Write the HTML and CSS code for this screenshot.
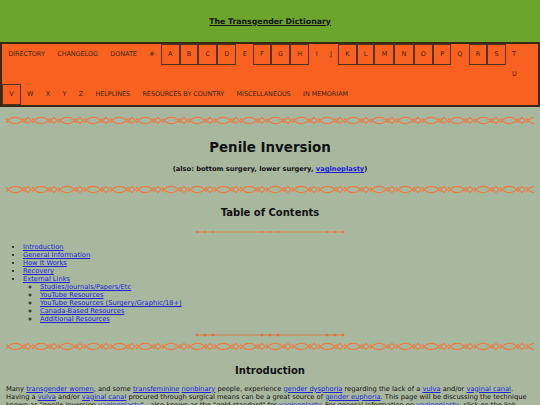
FILE: index.html
```html
<!DOCTYPE html>
<html>
<head>
<meta charset="utf-8">
<title>Penile Inversion - The Transgender Dictionary</title>
<link rel="stylesheet" href="styles.css">
</head>
<body>
<div class="top">
  <a href="#" class="siteName">The Transgender Dictionary</a>
</div>
<ul class="nav">
  <li><a href="#">DIRECTORY</a></li>
  <li><a href="#">CHANGELOG</a></li>
  <li><a href="#">DONATE</a></li>
  <li><a href="#">#</a></li>
  <li class="on"><a href="#">A</a></li>
  <li class="on"><a href="#">B</a></li>
  <li class="on"><a href="#">C</a></li>
  <li class="on"><a href="#">D</a></li>
  <li><a href="#">E</a></li>
  <li class="on"><a href="#">F</a></li>
  <li class="on"><a href="#">G</a></li>
  <li class="on"><a href="#">H</a></li>
  <li><a href="#">I</a></li>
  <li><a href="#">J</a></li>
  <li class="on"><a href="#">K</a></li>
  <li class="on"><a href="#">L</a></li>
  <li class="on"><a href="#">M</a></li>
  <li class="on"><a href="#">N</a></li>
  <li class="on"><a href="#">O</a></li>
  <li class="on"><a href="#">P</a></li>
  <li><a href="#">Q</a></li>
  <li class="on"><a href="#">R</a></li>
  <li class="on"><a href="#">S</a></li>
  <li><a href="#">T</a></li>
  <li><a href="#">U</a></li>
  <li class="on"><a href="#">V</a></li>
  <li><a href="#">W</a></li>
  <li><a href="#">X</a></li>
  <li><a href="#">Y</a></li>
  <li><a href="#">Z</a></li>
  <li><a href="#">HELPLINES</a></li>
  <li><a href="#">RESOURCES BY COUNTRY</a></li>
  <li><a href="#">MISCELLANEOUS</a></li>
  <li><a href="#">IN MEMORIAM</a></li>
</ul>
<div class="content">
  <!-- chain border, one link + bead per tile -->
  <svg class="chain" height="11">
    <defs>
      <pattern id="links" width="26" height="11" patternUnits="userSpaceOnUse">
        <path d="M0,8 C5,0.5 13.5,0.5 18.5,8 M0,3 C5,10.5 13.5,10.5 18.5,3" fill="none" stroke="#e97c45" stroke-width="1.35"/>
        <path d="M18.5,5.5 L22,2.5 L25.5,5.5 L22,8.5 Z" fill="none" stroke="#e97c45" stroke-width="1.2"/>
      </pattern>
    </defs>
    <rect width="100%" height="11" fill="url(#links)"/>
  </svg>
  <h1>Penile Inversion</h1>
  <p class="aka">(also: bottom surgery, lower surgery, <a href="#">vaginoplasty</a>)</p>
  <svg class="chain" height="11"><rect width="100%" height="11" fill="url(#links)"/></svg>

  <h2>Table of Contents</h2>
  <svg class="rule" width="150" height="6" viewBox="0 0 150 6">
    <line x1="2" y1="3" x2="148" y2="3" stroke="#e07a48" stroke-width="0.9"/>
    <g fill="#e07a48">
      <path d="M2,1.5 L3.5,3 L2,4.5 L0.5,3 Z M10,1.5 L11.5,3 L10,4.5 L8.5,3 Z M18,1.5 L19.5,3 L18,4.5 L16.5,3 Z"/>
      <path d="M67,1.5 L68.5,3 L67,4.5 L65.5,3 Z M75,1.5 L76.5,3 L75,4.5 L73.5,3 Z M83,1.5 L84.5,3 L83,4.5 L81.5,3 Z"/>
      <path d="M132,1.5 L133.5,3 L132,4.5 L130.5,3 Z M140,1.5 L141.5,3 L140,4.5 L138.5,3 Z M148,1.5 L149.5,3 L148,4.5 L146.5,3 Z"/>
    </g>
  </svg>
  <ul class="toc">
    <li><a href="#introduction">Introduction</a></li>
    <li><a href="#">General Information</a></li>
    <li><a href="#">How It Works</a></li>
    <li><a href="#">Recovery</a></li>
    <li><a href="#">External Links</a>
      <ul>
        <li><a href="#">Studies/Journals/Papers/Etc</a></li>
        <li><a href="#">YouTube Resources</a></li>
        <li><a href="#">YouTube Resources (Surgery/Graphic/18+)</a></li>
        <li><a href="#">Canada-Based Resources</a></li>
        <li><a href="#">Additional Resources</a></li>
      </ul>
    </li>
  </ul>
  <svg class="rule" width="150" height="6" viewBox="0 0 150 6">
    <line x1="2" y1="3" x2="148" y2="3" stroke="#e8692e" stroke-width="0.8"/>
    <g fill="#ee6424">
      <path d="M2,1 L2.6,2.4 L4,3 L2.6,3.6 L2,5 L1.4,3.6 L0,3 L1.4,2.4 Z M10,1 L10.6,2.4 L12,3 L10.6,3.6 L10,5 L9.4,3.6 L8,3 L9.4,2.4 Z M18,1 L18.6,2.4 L20,3 L18.6,3.6 L18,5 L17.4,3.6 L16,3 L17.4,2.4 Z"/>
      <path d="M67,1 L67.6,2.4 L69,3 L67.6,3.6 L67,5 L66.4,3.6 L65,3 L66.4,2.4 Z M75,1 L75.6,2.4 L77,3 L75.6,3.6 L75,5 L74.4,3.6 L73,3 L74.4,2.4 Z M83,1 L83.6,2.4 L85,3 L83.6,3.6 L83,5 L82.4,3.6 L81,3 L82.4,2.4 Z"/>
      <path d="M132,1 L132.6,2.4 L134,3 L132.6,3.6 L132,5 L131.4,3.6 L130,3 L131.4,2.4 Z M140,1 L140.6,2.4 L142,3 L140.6,3.6 L140,5 L139.4,3.6 L138,3 L139.4,2.4 Z M148,1 L148.6,2.4 L150,3 L148.6,3.6 L148,5 L147.4,3.6 L146,3 L147.4,2.4 Z"/>
    </g>
  </svg>
  <svg class="chain chainLow" height="11"><rect width="100%" height="11" fill="url(#links)"/></svg>

  <h2 id="introduction" class="sectionHead">Introduction</h2>
  <p class="text">Many <a href="#">transgender women</a>, and some <a href="#">transfeminine</a> <a href="#">nonbinary</a> people, experience <a href="#">gender dysphoria</a> regarding the lack of a <a href="#">vulva</a> and/or <a href="#">vaginal canal</a>. Having a <a href="#">vulva</a> and/or <a href="#">vaginal canal</a> procured through surgical means can be a great source of <a href="#">gender euphoria</a>. This page will be discussing the technique known as "penile inversion <a href="#">vaginoplasty</a>" - also known as the "gold standard" for <a href="#">vaginoplasty</a>. For general information on <a href="#">vaginoplasty</a>, click on the link above.</p>
</div>
</body>
</html>
```

FILE: styles.css
```css
html,body {
  margin: 0px;
  padding: 0px;
}
body {
  background: #a8b89f;
  color: #111;
  font-family: "DejaVu Sans", Verdana, sans-serif;
  font-size: 6.7px;
}
a {
  color: #2222d4;
}
/* site title bar */
.top {
  height: 42px;
  display: flex;
  align-items: center;
  justify-content: center;
  background: #6ca52b;
}
.top .siteName {
  color: #141414;
  font-weight: bold;
  font-size: 7.8px;
}
/* letter index, floated so the row spills over */
.nav {
  display: flow-root;
  list-style: none;
  margin: 0px;
  padding: 0px;
  border: 2px solid #3b2814;
  background: #f8611f;
}
.nav li {
  float: left;
}
.nav li a {
  display: block;
  padding: 0 6.2px;
  line-height: 20px;
  font-size: 6.4px;
  color: #3c2615;
  text-decoration: none;
}
.nav li.on a {
  line-height: 19px;
  border: 1px solid #55321a;
}
.content {
  padding: 0 6px;
}
.chain {
  display: block;
  width: 100%;
  margin-top: 8px;
}
h1 {
  margin: 14px 0 0;
  font-size: 13.4px;
  line-height: 16px;
  text-align: center;
}
.aka {
  margin: 9px 0 0;
  font-weight: bold;
  line-height: 8px;
  text-align: center;
}
.aka + .chain {
  margin-top: 11px;
}
h2 {
  margin: 12px 0 0;
  font-size: 10px;
  line-height: 12px;
  text-align: center;
}
.rule {
  display: block;
  margin: 9.5px auto 0;
}
.toc {
  margin: 8.5px 0 0;
  padding-left: 17px;
  line-height: 8px;
}
.toc ul {
  margin: 0px;
  padding-left: 17px;
  list-style: circle;
}
.toc + .rule {
  margin-top: 8.5px;
}
.chainLow {
  margin-top: 3px;
}
.sectionHead {
  margin-top: 13.5px;
}
.text {
  margin: 7.5px 0 0;
  line-height: 8.2px;
}
```
